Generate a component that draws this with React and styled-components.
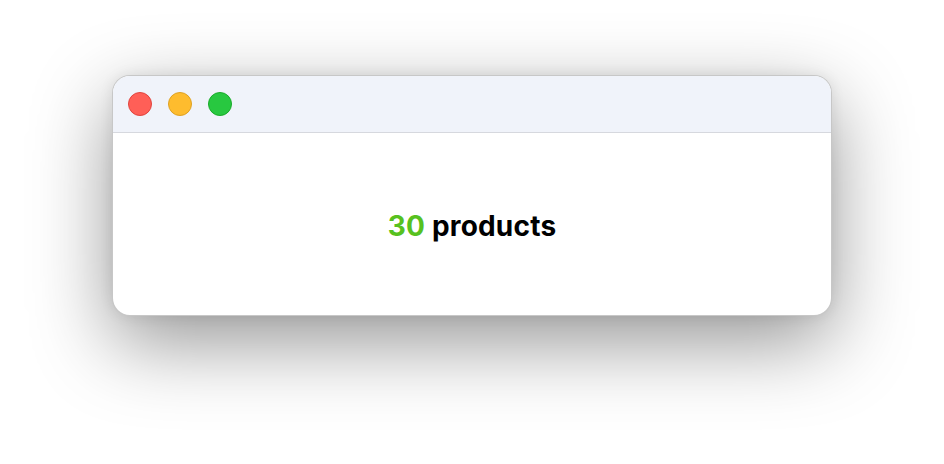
import styled, { createGlobalStyle } from "styled-components";
import React from "react";

const GlobalStyle = createGlobalStyle`
  html, body {
    margin: 0;
    padding: 0;
    background: #ffffff;
  }
`;

const App = () => {
  return (
    <Page>
      <GlobalStyle />
      <Window>
        <TitleBar>
          <Light color="#ff5f57" edge="#e0443e" />
          <Light color="#febc2e" edge="#dea123" />
          <Light color="#28c840" edge="#1aab29" />
        </TitleBar>
        <Content>
          <Count>30</Count>&nbsp;products
        </Content>
      </Window>
    </Page>
  );
};

const Page = styled.div`
  width: 944px;
  height: 464px;
  box-sizing: border-box;
  padding: 75px 112px 0;
`;
const Window = styled.div`
  width: 720px;
  height: 241px;
  box-sizing: border-box;
  border: 1px solid rgba(0, 0, 0, 0.22);
  border-radius: 18px;
  overflow: hidden;
  background: #fff;
  box-shadow: 0 26px 80px rgba(0, 0, 0, 0.42), 0 0 14px rgba(0, 0, 0, 0.08);
  display: flex;
  flex-direction: column;
`;
const TitleBar = styled.div`
  height: 56px;
  flex-shrink: 0;
  background: #f0f3fa;
  border-bottom: 1px solid #d6d8de;
  display: flex;
  align-items: center;
  gap: 16px;
  padding: 0 15px;
`;
const Light = styled.span`
  width: 24px;
  height: 24px;
  box-sizing: border-box;
  border-radius: 50%;
  background: ${(p) => p.color};
  border: 1px solid ${(p) => p.edge};
`;
const Content = styled.div`
  flex: 1;
  display: flex;
  align-items: center;
  justify-content: center;
  font-family: Inter, "Liberation Sans", sans-serif;
  font-weight: 700;
  font-size: 28px;
  letter-spacing: 0.2px;
  color: #000;
  padding-top: 4px;
`;
const Count = styled.span`
  color: #57c11f;
`;

export default App;
